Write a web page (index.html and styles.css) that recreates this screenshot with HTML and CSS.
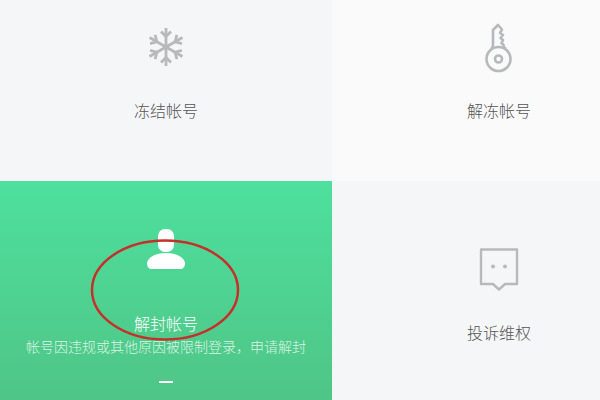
FILE: index.html
```html
<!DOCTYPE html>
<html lang="zh-CN">

<head>
    <meta charset="UTF-8">
    <title>帐号服务</title>
    <link rel="stylesheet" href="styles.css">
</head>

<body>
    <div class="grid">
        <div class="cell top grey">
            <svg class="icon" width="40" height="40" viewBox="0 0 40 40" fill="none" stroke="#b6babb" stroke-width="2.800">
                <g>
                    <path d="M20 1V39"/>
                    <path d="M15 4.500L20 9.500L25 4.500"/>
                    <path d="M15 35.500L20 30.500L25 35.500"/>
                </g>
                <g transform="rotate(60 20 20)">
                    <path d="M20 1V39"/>
                    <path d="M15 4.500L20 9.500L25 4.500"/>
                    <path d="M15 35.500L20 30.500L25 35.500"/>
                </g>
                <g transform="rotate(120 20 20)">
                    <path d="M20 1V39"/>
                    <path d="M15 4.500L20 9.500L25 4.500"/>
                    <path d="M15 35.500L20 30.500L25 35.500"/>
                </g>
            </svg>
            <p class="title">冻结帐号</p>
        </div>
        <div class="cell top light side">
            <svg class="icon key" width="30" height="50" viewBox="0 0 30 50" fill="none" stroke="#b6babb" stroke-width="2.600">
                <path d="M7 26C8.500 25 9 24 9 22V7L14 2L18 6.500L16 10L19 12L16.500 15L19 17L17.500 20L19.500 22C19.500 24 20 25 22 26" stroke-linejoin="round"/>
                <circle cx="14.500" cy="36" r="12"/>
                <circle cx="14.500" cy="36" r="3.500"/>
            </svg>
            <p class="title">解冻帐号</p>
        </div>
        <div class="cell bottom green">
            <svg class="icon" width="40" height="42" viewBox="0 0 40 42" fill="#fff">
                <rect x="12" y="0" width="16" height="23" rx="7"/>
                <path d="M1 34C2 28 10 24 20 24C30 24 38 28 39 34C39 38 37 40 34 40H6C3 40 1 38 1 34Z"/>
            </svg>
            <p class="title">解封帐号</p>
            <p class="desc">帐号因违规或其他原因被限制登录，申请解封</p>
            <span class="dash"></span>
        </div>
        <div class="cell bottom grey side">
            <svg class="icon" width="40" height="44" viewBox="0 0 40 44" fill="none" stroke="#b6babb" stroke-width="2.400">
                <path d="M2 1.500H38V36H26L20 41.500L14 36H2Z" stroke-linejoin="round"/>
                <circle cx="14" cy="18.500" r="2" fill="#b6babb" stroke="none"/>
                <circle cx="26" cy="18.500" r="2" fill="#b6babb" stroke="none"/>
            </svg>
            <p class="title">投诉维权</p>
        </div>
    </div>
    <svg class="mark" width="150" height="102" viewBox="0 0 150 102" fill="none">
        <ellipse cx="75" cy="51" rx="73" ry="49.500" stroke="#c4312b" stroke-width="2.500"/>
    </svg>
</body>

</html>
```

FILE: styles.css
```css
* {
    margin: 0;
    padding: 0;
}

html,
body {
    height: 100%;
    overflow: hidden;
}

body {
    position: relative;
    font-family: "Liberation Sans", "Noto Sans CJK SC", sans-serif;
}

.grid {
    display: grid;
    grid-template-columns: 332px 268px;
    grid-template-rows: 181px 219px;
}

.cell {
    display: flex;
    flex-direction: column;
    align-items: center;
}

/* right column runs past the window, so its content sits off centre */
.side {
    padding-left: 66px;
}

.top {
    padding-top: 27px;
}

.bottom {
    padding-top: 48px;
}

.top.side {
    padding-top: 23px;
}

.bottom.side {
    padding-top: 67px;
}

.grey {
    background-color: #f5f6f8;
}

.light {
    background-color: #fafafa;
}

.green {
    background: linear-gradient(#4ee09e, #4fc586);
}

.title {
    font-size: 16px;
    font-weight: 300;
    line-height: 24px;
    color: #555;
}

.top .title {
    margin-top: 33px;
}

.top .key + .title {
    margin-top: 27px;
}

.bottom.side .title {
    margin-top: 30px;
}

.green .icon {
    margin-bottom: 42px;
}

.green .title {
    color: #fff;
}

.desc {
    margin-top: -1px;
    font-size: 14px;
    font-weight: 300;
    line-height: 22px;
    color: rgba(255, 255, 255, .8);
}

.dash {
    width: 14px;
    height: 2px;
    margin-top: 23px;
    background-color: #fff;
}

.mark {
    position: absolute;
    left: 90px;
    top: 239px;
}
```
